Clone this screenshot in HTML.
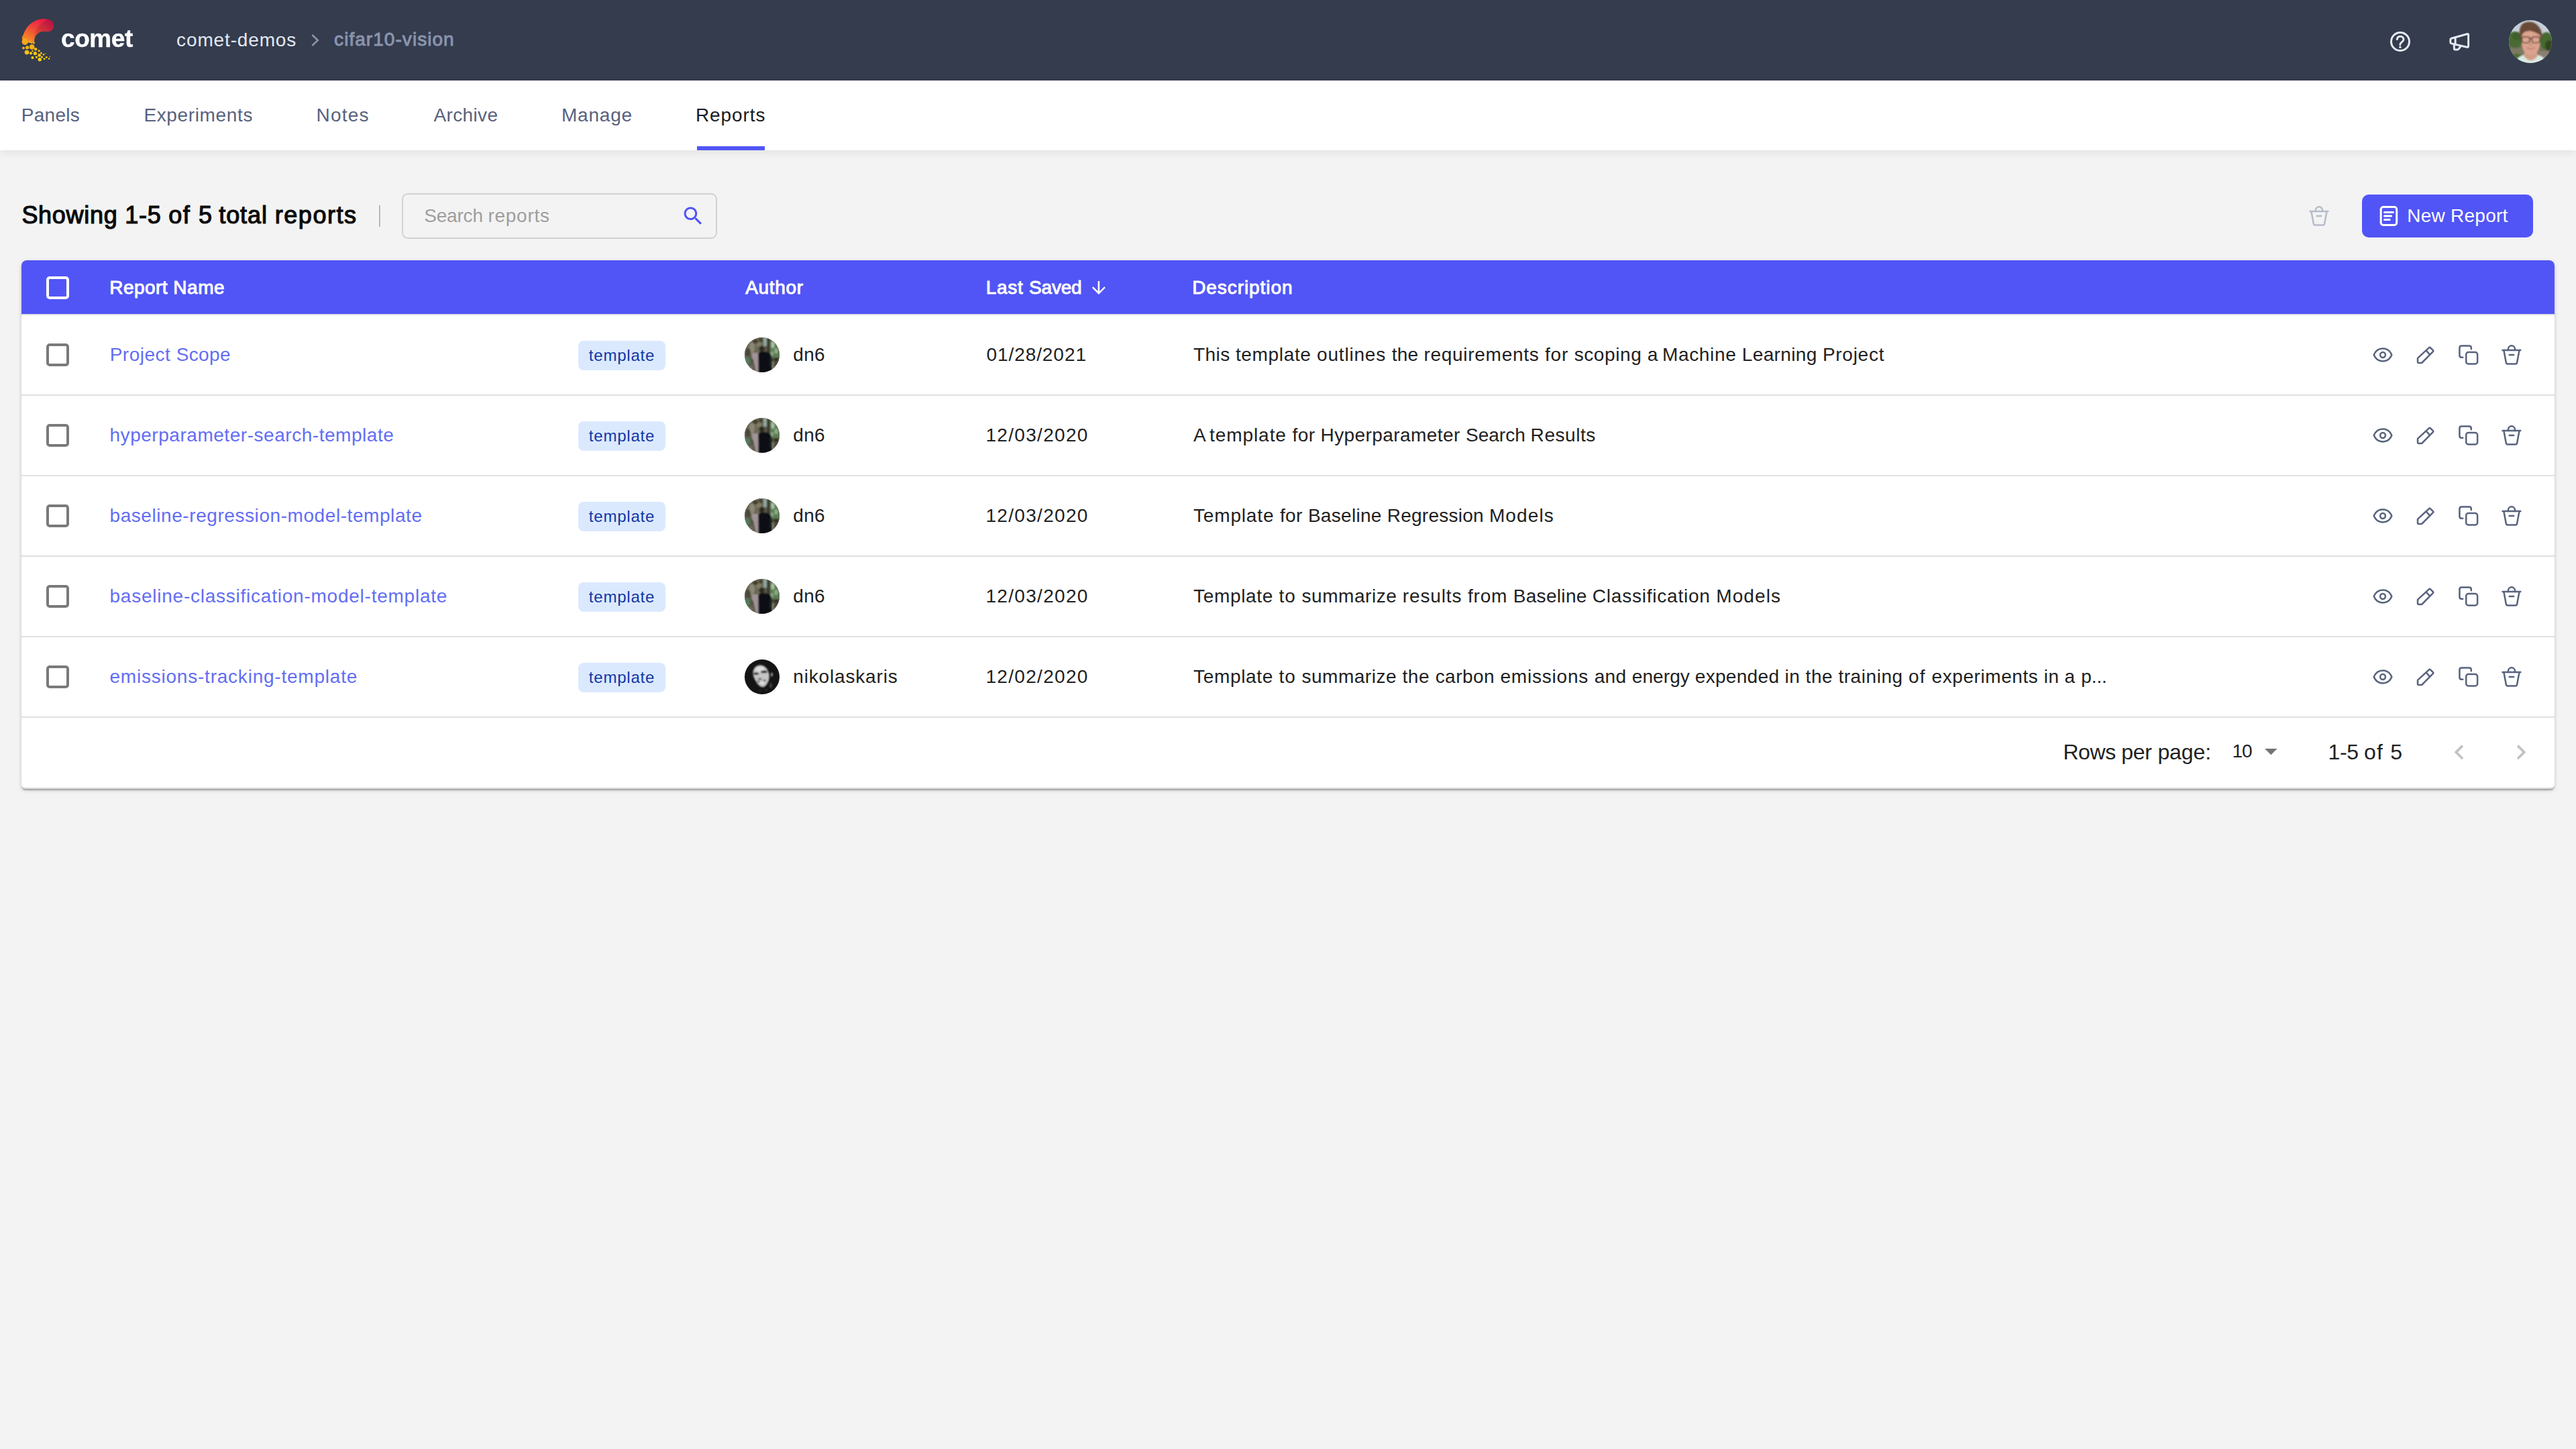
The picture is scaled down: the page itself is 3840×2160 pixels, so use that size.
<!DOCTYPE html>
<html lang="en">
<head>
<meta charset="utf-8">
<title>Reports - cifar10-vision - Comet</title>
<style>
html,body{margin:0;padding:0}
body{width:3840px;height:2160px;background:#f3f3f3;position:relative;overflow:hidden;font-family:"Liberation Sans",sans-serif}
.a{position:absolute}
.t{position:absolute;white-space:nowrap;line-height:1;display:block}
#hdr{left:0;top:0;width:3840px;height:120px;background:#343c4e}
#tabs{left:0;top:120px;width:3840px;height:104px;background:#fff;box-shadow:0 3px 12px rgba(0,0,0,.075)}
#ind{left:1039px;top:218px;width:101px;height:6px;background:#5155f5}
#sep{left:565px;top:306px;width:2px;height:32px;background:#b9b9b9}
#search{left:599px;top:288px;width:466px;height:64px;border:2px solid #d2d2d2;border-radius:9px}
#newbtn{left:3521px;top:290px;width:255px;height:64px;background:#5155f5;border-radius:10px}
#tbl{left:32px;top:388px;width:3776px;height:786px;background:#fff;border-bottom:2px solid #dcdcdc;border-radius:8px 8px 6px 6px;box-shadow:0 2px 6px rgba(0,0,0,.17),0 4px 2px -2px rgba(0,0,0,.12),0 2px 2px rgba(0,0,0,.14)}
#th{left:32px;top:388px;width:3776px;height:80px;background:#5155f5;border-radius:8px 8px 0 0}
.rl{position:absolute;left:32px;width:3776px;height:2px;background:#e0e0e0}
.cb{position:absolute;left:69px;width:26px;height:26px;border:4px solid #7a7a7a;border-radius:5px}
.badge{position:absolute;left:862px;width:130px;height:44px;background:#dbe9fe;border-radius:8px}
.av{position:absolute;left:1110px;width:52px;height:52px;border-radius:50%;overflow:hidden}
svg{position:absolute;left:0;top:0;overflow:visible}
</style>
</head>
<body>
<div id="hdr" class="a"></div>
<div id="tabs" class="a"></div>
<div id="ind" class="a"></div>
<div id="sep" class="a"></div>
<div id="search" class="a"></div>
<div id="newbtn" class="a"></div>
<div id="tbl" class="a"></div>
<div id="th" class="a"></div>
<div class="rl" style="top:468px"></div>
<div class="rl" style="top:588px"></div>
<div class="rl" style="top:708px"></div>
<div class="rl" style="top:828px"></div>
<div class="rl" style="top:948px"></div>
<div class="rl" style="top:1068px"></div>
<div class="cb" style="top:412px;border-color:#fff"></div>
<div class="cb" style="top:512px"></div>
<div class="cb" style="top:632px"></div>
<div class="cb" style="top:752px"></div>
<div class="cb" style="top:872px"></div>
<div class="cb" style="top:992px"></div>
<div class="badge" style="top:508px"></div>
<div class="badge" style="top:628px"></div>
<div class="badge" style="top:748px"></div>
<div class="badge" style="top:868px"></div>
<div class="badge" style="top:988px"></div>
<svg width="3840" height="2160" viewBox="0 0 3840 2160"><defs><clipPath id="uc"><circle cx="3772" cy="62" r="32"/></clipPath><clipPath id="ac"><circle cx="26" cy="26" r="26"/></clipPath><filter id="bl" x="-20%" y="-20%" width="140%" height="140%"><feGaussianBlur stdDeviation="1.3"/></filter><filter id="bl2" x="-20%" y="-20%" width="140%" height="140%"><feGaussianBlur stdDeviation="0.9"/></filter><g id="dn6"><g clip-path="url(#ac)"><rect width="52" height="52" fill="#5d5a4b"/><g filter="url(#bl)"><rect x="-3" y="-3" width="30" height="28" fill="#6a6756"/><ellipse cx="11" cy="15" rx="4" ry="8" fill="#8d8874"/><ellipse cx="21" cy="10" rx="4" ry="4" fill="#7e7b64"/><ellipse cx="16" cy="6" rx="4" ry="3" fill="#3f3d2b"/><ellipse cx="24" cy="4" rx="3" ry="3" fill="#45432f"/><ellipse cx="5" cy="22" rx="4" ry="6" fill="#4a4638"/><rect x="28" y="-3" width="5" height="16" fill="#8fa69c"/><rect x="33" y="-3" width="5" height="26" fill="#403c30"/><rect x="38" y="-3" width="17" height="34" fill="#5d7c55"/><ellipse cx="42" cy="11" rx="2.6" ry="5" fill="#a9c2a0"/><ellipse cx="47" cy="20" rx="2.5" ry="4" fill="#93ae8a"/><ellipse cx="41" cy="24" rx="2" ry="3" fill="#8eaa88"/><rect x="38" y="30" width="17" height="25" fill="#4b4a3b"/><rect x="39.5" y="36" width="4" height="18" fill="#858374"/><ellipse cx="47" cy="33" rx="2.5" ry="2.5" fill="#2b2a1c"/><ellipse cx="3" cy="35" rx="5" ry="6" fill="#4f7a5c"/><rect x="-2" y="42" width="14" height="12" fill="#66735c"/><ellipse cx="13.5" cy="34" rx="2.6" ry="3.4" fill="#2a241c"/><path d="M10.5 23 L20 23 L22 54 L17 54 Q15 38 10.5 29Z" fill="#a09396"/><ellipse cx="25.5" cy="17" rx="4" ry="4.4" fill="#2f2a1f"/><path d="M20.5 54 V25 Q21 21 26 21 L35 22 Q40 24 40 31 L41.5 54Z" fill="#0d0f13"/><rect x="37" y="30" width="4" height="14" fill="#14201a"/></g></g></g><g id="nk"><g clip-path="url(#ac)"><rect width="52" height="52" fill="#141414"/><g filter="url(#bl)"><path d="M16.2 11 Q22 7 28 9.5 Q34 12 36.5 22 Q37.5 30 34.5 34.5 Q31 41.5 26.5 41.5 Q21 40 18 34.5 Q13.5 28 12.5 22 Q12 15 16.2 11Z" fill="#c4c4c4"/><ellipse cx="23" cy="14.5" rx="7" ry="4" fill="#dcdcdc"/><ellipse cx="17" cy="21.2" rx="4.2" ry="1.7" fill="#1c1c1c"/><ellipse cx="29" cy="18.4" rx="5" ry="1.9" fill="#1c1c1c"/><ellipse cx="22.8" cy="29.2" rx="3" ry="1.1" fill="#3a3a3a"/><ellipse cx="20.5" cy="33" rx="1.8" ry="1.2" fill="#444"/><ellipse cx="29.8" cy="31.2" rx="2" ry="1.2" fill="#555"/><ellipse cx="26" cy="35" rx="3.5" ry="1.6" fill="#e6e6e6"/><ellipse cx="40.5" cy="22.5" rx="1.4" ry="3" fill="#a8a8a8"/><ellipse cx="39" cy="39" rx="2.2" ry="4" fill="#3c3c3c"/><ellipse cx="23" cy="46.5" rx="2" ry="1.4" fill="#2c2c2c"/><ellipse cx="32" cy="45.5" rx="2" ry="1.4" fill="#2c2c2c"/></g></g></g></defs><g clip-path="url(#uc)"><g transform="translate(3740 30)"><rect x="-2" y="-2" width="68" height="68" fill="#c6cfd9"/><g filter="url(#bl)"><rect x="-4" y="30" width="72" height="40" fill="#6f6e58"/><ellipse cx="9" cy="29" rx="12" ry="12" fill="#4a6a36"/><ellipse cx="12" cy="24" rx="7" ry="6" fill="#3f5e2c"/><ellipse cx="56" cy="31" rx="10" ry="13" fill="#456b2f"/><ellipse cx="60" cy="38" rx="6" ry="8" fill="#33471f"/><rect x="-4" y="42" width="26" height="26" fill="#7c7a60"/><ellipse cx="12" cy="56" rx="10" ry="6" fill="#4f6a36"/><rect x="44" y="46" width="24" height="20" fill="#8d7f70"/></g><g filter="url(#bl2)"><path d="M6 70 Q10 55 22 51.5 L43 51.5 Q55 55 60 70Z" fill="#d8eae2"/><path d="M22.5 46 H42.5 V54 Q32.5 66 22.5 54Z" fill="#d49b87"/><path d="M19 22 Q19 9 32.5 9 Q46.5 9 46.5 22 V35 Q45 51.5 32.7 51.5 Q20.5 51.5 19 35Z" fill="#dca48f"/><path d="M16.6 28 Q13.6 13 19.5 6.2 Q26 0.8 36 3.2 Q47 7.6 49.9 22 Q50.2 26 47.4 30 Q47.4 25 45.5 21.5 Q40 18 32 16 Q25 16 21.5 19 Q19 22 18.8 28Z" fill="#694a38"/><g fill="none" stroke="#2e221e" stroke-width="1.3"><rect x="19.4" y="24.8" width="11.6" height="8.8" rx="3.2"/><rect x="34.4" y="24.8" width="11.6" height="8.8" rx="3.2"/><path d="M31 27.2 H34.4"/></g><path d="M26 41.5 Q32.5 44 39 41.5" fill="none" stroke="#b9766a" stroke-width="1.6"/><path d="M30 36.5 H35" stroke="#b9806d" stroke-width="1.5"/></g></g></g><use href="#dn6" x="1110" y="503"/><use href="#dn6" x="1110" y="623"/><use href="#dn6" x="1110" y="743"/><use href="#dn6" x="1110" y="863"/><use href="#nk" x="1110" y="983"/></svg>
<svg width="3840" height="2160" viewBox="0 0 3840 2160">
<defs><linearGradient id="lg1" gradientUnits="userSpaceOnUse" x1="60" y1="28" x2="40" y2="64"><stop offset="0" stop-color="#ef1b48"/><stop offset=".45" stop-color="#ef4a38"/><stop offset="1" stop-color="#f59a1f"/></linearGradient><linearGradient id="lg2" gradientUnits="userSpaceOnUse" x1="80" y1="32" x2="50" y2="62"><stop offset="0" stop-color="#b80d44"/><stop offset=".5" stop-color="#cf3239"/><stop offset="1" stop-color="#ea6a2a"/></linearGradient></defs><path d="M33.1 58.6 C31.9 56.5 34.0 53.7 35.0 50.9 C36.1 48.2 37.6 44.8 39.5 42.1 C41.3 39.4 43.5 36.9 46.1 34.9 C48.7 32.9 52.0 31.0 54.9 29.9 C57.9 28.8 60.8 28.4 63.7 28.3 C66.7 28.1 70.2 28.4 72.6 29.1 C75.0 29.8 76.9 31.3 78.1 32.7 C79.3 34.1 80.0 35.9 80.0 37.7 C80.1 39.4 79.4 41.7 78.4 43.2 C77.3 44.7 75.4 46.1 73.7 46.8 C72.0 47.4 70.1 47.0 68.2 47.1 C66.2 47.1 64.0 46.6 62.1 47.1 C60.2 47.5 58.1 48.6 56.6 49.8 C55.0 51.0 53.6 52.6 52.7 54.2 C51.8 55.9 51.3 58.1 51.1 59.7 C50.8 61.4 52.4 63.5 50.9 64.2 C49.5 64.8 45.2 64.5 42.2 63.6 C39.2 62.7 34.3 60.8 33.1 58.6Z" fill="url(#lg1)"/><path d="M70.9 28.9 C74.0 28.3 76.6 31.2 78.1 32.7 C79.6 34.2 80.0 35.9 80.0 37.7 C80.1 39.4 79.4 41.7 78.4 43.2 C77.3 44.7 75.4 46.1 73.7 46.8 C72.0 47.4 70.1 47.0 68.2 47.1 C66.2 47.1 64.0 46.6 62.1 47.1 C60.2 47.5 58.1 48.6 56.6 49.8 C55.0 51.0 53.6 52.6 52.7 54.2 C51.8 55.9 51.3 58.1 51.1 59.7 C50.8 61.4 50.9 64.9 50.9 64.2 C51.0 63.4 50.7 58.6 51.2 55.3 C51.6 52.1 52.4 48.0 53.8 44.8 C55.3 41.7 57.0 39.2 59.9 36.6 C62.7 33.9 67.9 29.6 70.9 28.9Z" fill="url(#lg2)"/><circle cx="37.2" cy="62.2" r="4.69" fill="rgb(244,168,27)"/><circle cx="44.7" cy="62.0" r="1.93" fill="rgb(244,168,28)"/><circle cx="50.5" cy="64.2" r="1.38" fill="rgb(244,171,26)"/><circle cx="46.9" cy="64.2" r="0.99" fill="rgb(244,171,26)"/><circle cx="47.6" cy="69.9" r="3.75" fill="rgb(247,180,20)"/><circle cx="40.6" cy="70.8" r="2.65" fill="rgb(247,182,20)"/><circle cx="35.0" cy="71.6" r="1.93" fill="rgb(247,183,19)"/><circle cx="53.1" cy="73.3" r="2.21" fill="rgb(248,186,17)"/><circle cx="58.1" cy="75.8" r="1.66" fill="rgb(249,190,15)"/><circle cx="40.0" cy="78.1" r="3.31" fill="rgb(250,194,13)"/><circle cx="48.5" cy="76.0" r="1.21" fill="rgb(249,191,15)"/><circle cx="46.0" cy="79.3" r="2.10" fill="rgb(251,196,12)"/><circle cx="52.4" cy="79.6" r="2.65" fill="rgb(251,197,12)"/><circle cx="58.7" cy="82.4" r="2.32" fill="rgb(252,201,9)"/><circle cx="61.4" cy="79.2" r="1.38" fill="rgb(251,196,12)"/><circle cx="65.1" cy="81.3" r="1.38" fill="rgb(251,199,10)"/><circle cx="68.4" cy="79.7" r="0.66" fill="rgb(251,197,12)"/><circle cx="48.5" cy="86.0" r="2.10" fill="rgb(253,207,6)"/><circle cx="54.4" cy="85.1" r="1.66" fill="rgb(253,206,7)"/><circle cx="62.5" cy="85.0" r="1.55" fill="rgb(253,205,7)"/><circle cx="59.2" cy="88.7" r="2.65" fill="rgb(255,212,4)"/><circle cx="66.1" cy="87.8" r="1.38" fill="rgb(254,210,4)"/><circle cx="69.3" cy="85.3" r="1.38" fill="rgb(253,206,7)"/><circle cx="73.1" cy="87.5" r="1.21" fill="rgb(254,209,5)"/><circle cx="74.5" cy="84.3" r="0.66" fill="rgb(253,204,7)"/>
<path d="M465.3 52 L473.8 60 L465.3 68" fill="none" stroke="#8a94ab" stroke-width="2.6"/>
<g fill="none" stroke="#e6e9f2" stroke-width="3" stroke-linecap="round" stroke-linejoin="round"><circle cx="3578" cy="62" r="13.5"/><path d="M3573.3 58.6 C3573.6 55.8 3575.6 54.3 3578.2 54.3 C3581 54.3 3583 56.2 3583 58.7 C3583 62.6 3577.8 62.6 3577.8 66.6"/><circle cx="3577.9" cy="70.3" r="1.7" fill="#e6e9f2" stroke="none"/><path d="M3654.3 57.3 L3677.4 50.7 Q3679.6 50.1 3679.6 52.3 V68.6 Q3679.6 70.8 3677.4 70.3 L3654.3 64.9 Q3652.8 64.5 3652.8 63 V59.2 Q3652.8 57.7 3654.3 57.3Z"/><path d="M3660.1 55.8 V66.2"/><path d="M3658.3 66 V72 Q3658.3 74 3660.3 74 H3663.2 Q3664.3 74 3665 73.1 L3667.8 69.3"/></g>
<g transform="translate(1015.1 303.9) scale(1.51)"><path fill="#5155f5" d="M15.5 14h-.79l-.28-.27C15.41 12.59 16 11.11 16 9.5 16 5.91 13.09 3 9.5 3S3 5.91 3 9.5 5.91 16 9.5 16c1.61 0 3.09-.59 4.23-1.57l.27.28v.79l5 4.99L20.49 19l-4.99-5zm-6 0C7.01 14 5 11.99 5 9.5S7.01 5 9.5 5 14 7.01 14 9.5 11.99 14 9.5 14z"/></g>
<g fill="none" stroke="#b5bccb" stroke-width="2.5" stroke-linecap="round" stroke-linejoin="round"><path d="M3443.5 315.0 H3470.3"/><path d="M3451.9 315.0 V313.4 a5.05 5.05 0 0 1 10.1 0 V315.0"/><path d="M3445.4 315.3 L3448.8 333.4 Q3449.2 335.4 3451.2 335.4 H3462.7 Q3464.7 335.4 3465.1 333.4 L3468.5 315.3"/><path d="M3453.6 322.0 H3460.2"/></g>
<g fill="none" stroke="#fff" stroke-width="3" stroke-linecap="round" stroke-linejoin="round"><rect x="3549.15" y="308.5" width="23.55" height="27" rx="3.6"/><path d="M3554.5 316.6 H3567.4 M3554.5 322 H3564.5 M3554.5 327.4 H3562.2"/></g>
<g transform="translate(1622.9 414) scale(1.25)"><path fill="#fff" d="M20 12l-1.41-1.41L13 16.17V4h-2v12.17l-5.58-5.59L4 12l8 8 8-8z"/></g>
<g transform="translate(0 0)" fill="none" stroke="#58627e" stroke-width="2.5" stroke-linecap="round" stroke-linejoin="round"><path d="M3538.7 529 C3541 523.5 3545.5 519.5 3552 519.5 C3558.5 519.5 3563 523.5 3565.3 529 C3563 534.5 3558.5 538.4 3552 538.4 C3545.5 538.4 3541 534.5 3538.7 529Z"/><circle cx="3552" cy="529" r="3.9"/><path d="M3604 533.8 L3620.8 518.3 Q3621.9 517.3 3623 518.4 L3626.8 522.2 Q3627.8 523.2 3626.8 524.2 L3610.6 540.5 Q3610.2 540.9 3609.6 540.9 H3605.5 Q3604 540.9 3604 539.4 Z"/><path d="M3616.6 522.7 L3622 528.3"/><path d="M3683.8 520.2 V518.4 Q3683.8 515.4 3680.8 515.4 H3669.4 Q3666.4 515.4 3666.4 518.4 V529.8 Q3666.4 532.8 3669.4 532.8 H3671.2"/><rect x="3676.2" y="525.1" width="16.9" height="17.3" rx="3.2"/><path d="M3730.5 522.0 H3757.3"/><path d="M3738.9 522.0 V520.4 a5.05 5.05 0 0 1 10.1 0 V522.0"/><path d="M3732.4 522.3 L3735.8 540.4 Q3736.2 542.4 3738.2 542.4 H3749.7 Q3751.7 542.4 3752.1 540.4 L3755.5 522.3"/><path d="M3740.6 529.0 H3747.2"/></g>
<g transform="translate(0 120)" fill="none" stroke="#58627e" stroke-width="2.5" stroke-linecap="round" stroke-linejoin="round"><path d="M3538.7 529 C3541 523.5 3545.5 519.5 3552 519.5 C3558.5 519.5 3563 523.5 3565.3 529 C3563 534.5 3558.5 538.4 3552 538.4 C3545.5 538.4 3541 534.5 3538.7 529Z"/><circle cx="3552" cy="529" r="3.9"/><path d="M3604 533.8 L3620.8 518.3 Q3621.9 517.3 3623 518.4 L3626.8 522.2 Q3627.8 523.2 3626.8 524.2 L3610.6 540.5 Q3610.2 540.9 3609.6 540.9 H3605.5 Q3604 540.9 3604 539.4 Z"/><path d="M3616.6 522.7 L3622 528.3"/><path d="M3683.8 520.2 V518.4 Q3683.8 515.4 3680.8 515.4 H3669.4 Q3666.4 515.4 3666.4 518.4 V529.8 Q3666.4 532.8 3669.4 532.8 H3671.2"/><rect x="3676.2" y="525.1" width="16.9" height="17.3" rx="3.2"/><path d="M3730.5 522.0 H3757.3"/><path d="M3738.9 522.0 V520.4 a5.05 5.05 0 0 1 10.1 0 V522.0"/><path d="M3732.4 522.3 L3735.8 540.4 Q3736.2 542.4 3738.2 542.4 H3749.7 Q3751.7 542.4 3752.1 540.4 L3755.5 522.3"/><path d="M3740.6 529.0 H3747.2"/></g>
<g transform="translate(0 240)" fill="none" stroke="#58627e" stroke-width="2.5" stroke-linecap="round" stroke-linejoin="round"><path d="M3538.7 529 C3541 523.5 3545.5 519.5 3552 519.5 C3558.5 519.5 3563 523.5 3565.3 529 C3563 534.5 3558.5 538.4 3552 538.4 C3545.5 538.4 3541 534.5 3538.7 529Z"/><circle cx="3552" cy="529" r="3.9"/><path d="M3604 533.8 L3620.8 518.3 Q3621.9 517.3 3623 518.4 L3626.8 522.2 Q3627.8 523.2 3626.8 524.2 L3610.6 540.5 Q3610.2 540.9 3609.6 540.9 H3605.5 Q3604 540.9 3604 539.4 Z"/><path d="M3616.6 522.7 L3622 528.3"/><path d="M3683.8 520.2 V518.4 Q3683.8 515.4 3680.8 515.4 H3669.4 Q3666.4 515.4 3666.4 518.4 V529.8 Q3666.4 532.8 3669.4 532.8 H3671.2"/><rect x="3676.2" y="525.1" width="16.9" height="17.3" rx="3.2"/><path d="M3730.5 522.0 H3757.3"/><path d="M3738.9 522.0 V520.4 a5.05 5.05 0 0 1 10.1 0 V522.0"/><path d="M3732.4 522.3 L3735.8 540.4 Q3736.2 542.4 3738.2 542.4 H3749.7 Q3751.7 542.4 3752.1 540.4 L3755.5 522.3"/><path d="M3740.6 529.0 H3747.2"/></g>
<g transform="translate(0 360)" fill="none" stroke="#58627e" stroke-width="2.5" stroke-linecap="round" stroke-linejoin="round"><path d="M3538.7 529 C3541 523.5 3545.5 519.5 3552 519.5 C3558.5 519.5 3563 523.5 3565.3 529 C3563 534.5 3558.5 538.4 3552 538.4 C3545.5 538.4 3541 534.5 3538.7 529Z"/><circle cx="3552" cy="529" r="3.9"/><path d="M3604 533.8 L3620.8 518.3 Q3621.9 517.3 3623 518.4 L3626.8 522.2 Q3627.8 523.2 3626.8 524.2 L3610.6 540.5 Q3610.2 540.9 3609.6 540.9 H3605.5 Q3604 540.9 3604 539.4 Z"/><path d="M3616.6 522.7 L3622 528.3"/><path d="M3683.8 520.2 V518.4 Q3683.8 515.4 3680.8 515.4 H3669.4 Q3666.4 515.4 3666.4 518.4 V529.8 Q3666.4 532.8 3669.4 532.8 H3671.2"/><rect x="3676.2" y="525.1" width="16.9" height="17.3" rx="3.2"/><path d="M3730.5 522.0 H3757.3"/><path d="M3738.9 522.0 V520.4 a5.05 5.05 0 0 1 10.1 0 V522.0"/><path d="M3732.4 522.3 L3735.8 540.4 Q3736.2 542.4 3738.2 542.4 H3749.7 Q3751.7 542.4 3752.1 540.4 L3755.5 522.3"/><path d="M3740.6 529.0 H3747.2"/></g>
<g transform="translate(0 480)" fill="none" stroke="#58627e" stroke-width="2.5" stroke-linecap="round" stroke-linejoin="round"><path d="M3538.7 529 C3541 523.5 3545.5 519.5 3552 519.5 C3558.5 519.5 3563 523.5 3565.3 529 C3563 534.5 3558.5 538.4 3552 538.4 C3545.5 538.4 3541 534.5 3538.7 529Z"/><circle cx="3552" cy="529" r="3.9"/><path d="M3604 533.8 L3620.8 518.3 Q3621.9 517.3 3623 518.4 L3626.8 522.2 Q3627.8 523.2 3626.8 524.2 L3610.6 540.5 Q3610.2 540.9 3609.6 540.9 H3605.5 Q3604 540.9 3604 539.4 Z"/><path d="M3616.6 522.7 L3622 528.3"/><path d="M3683.8 520.2 V518.4 Q3683.8 515.4 3680.8 515.4 H3669.4 Q3666.4 515.4 3666.4 518.4 V529.8 Q3666.4 532.8 3669.4 532.8 H3671.2"/><rect x="3676.2" y="525.1" width="16.9" height="17.3" rx="3.2"/><path d="M3730.5 522.0 H3757.3"/><path d="M3738.9 522.0 V520.4 a5.05 5.05 0 0 1 10.1 0 V522.0"/><path d="M3732.4 522.3 L3735.8 540.4 Q3736.2 542.4 3738.2 542.4 H3749.7 Q3751.7 542.4 3752.1 540.4 L3755.5 522.3"/><path d="M3740.6 529.0 H3747.2"/></g>
<path d="M3376 1116 L3385.3 1125.3 L3394.6 1116Z" fill="#757575"/>
<g transform="translate(3644 1099.3) scale(1.8333)"><path fill="#c2c2c2" d="M15.41 7.41L14 6l-6 6 6 6 1.41-1.41L10.83 12z"/></g>
<g transform="translate(3736 1099.3) scale(1.8333)"><path fill="#c2c2c2" d="M10 6L8.59 7.41 13.17 12l-4.58 4.59L10 18l6-6z"/></g>
</svg>
<span class="t" style="left:91.19px;top:40.10px;font-size:36.5px;letter-spacing:-0.4px;color:#fff;font-weight:700;-webkit-text-stroke:0.4px #fff;transform:scaleX(1.0138);transform-origin:0 0">comet</span>
<span class="t" style="left:263.10px;top:45.60px;font-size:28px;letter-spacing:0.859px;color:#e4e8f2">comet-demos</span>
<span class="t" style="left:498.08px;top:45.30px;font-size:28px;letter-spacing:1.051px;color:#8a94ab;-webkit-text-stroke:0.95px #8a94ab">cifar10-vision</span>
<span class="t" style="left:31.80px;top:157.70px;font-size:28px;letter-spacing:0.277px;color:#58617d">Panels</span>
<span class="t" style="left:214.40px;top:157.70px;font-size:28px;letter-spacing:0.639px;color:#58617d">Experiments</span>
<span class="t" style="left:471.50px;top:157.70px;font-size:28px;letter-spacing:1.189px;color:#58617d">Notes</span>
<span class="t" style="left:646.50px;top:157.70px;font-size:28px;letter-spacing:0.351px;color:#58617d">Archive</span>
<span class="t" style="left:837.00px;top:157.70px;font-size:28px;letter-spacing:0.797px;color:#58617d">Manage</span>
<span class="t" style="left:1037.00px;top:157.70px;font-size:28px;letter-spacing:0.893px;color:#191b22">Reports</span>
<span class="t" style="left:32.41px;top:303.13px;font-size:36px;color:#0b0b0b;-webkit-text-stroke:1.22px #0b0b0b"><span style="letter-spacing:0.701px">Showing </span><span style="letter-spacing:0.767px">1-5 </span><span style="letter-spacing:1.558px">of </span><span style="letter-spacing:0.138px">5 </span><span style="letter-spacing:0.909px">total </span><span style="letter-spacing:1.539px">reports</span></span>
<span class="t" style="left:632.20px;top:307.70px;font-size:28px;color:#9e9e9e"><span style="letter-spacing:-0.185px">Search </span><span style="letter-spacing:0.743px">reports</span></span>
<span class="t" style="left:3588.20px;top:307.70px;font-size:28px;color:#ffffff"><span style="letter-spacing:0.252px">New </span><span style="letter-spacing:0.268px">Report</span></span>
<span class="t" style="left:163.28px;top:414.90px;font-size:28px;color:#ffffff;-webkit-text-stroke:0.95px #ffffff"><span style="letter-spacing:0.440px">Report </span><span style="letter-spacing:0.610px">Name</span></span>
<span class="t" style="left:1111.18px;top:414.90px;font-size:28px;letter-spacing:0.695px;color:#ffffff;-webkit-text-stroke:0.95px #ffffff">Author</span>
<span class="t" style="left:1469.68px;top:414.90px;font-size:28px;color:#ffffff;-webkit-text-stroke:0.95px #ffffff"><span style="letter-spacing:0.739px">Last </span><span style="letter-spacing:-0.218px">Saved</span></span>
<span class="t" style="left:1777.18px;top:414.90px;font-size:28px;letter-spacing:0.927px;color:#ffffff;-webkit-text-stroke:0.95px #ffffff">Description</span>
<span class="t" style="left:163.70px;top:514.60px;font-size:28px;color:#636df3"><span style="letter-spacing:0.510px">Project </span><span style="letter-spacing:0.370px">Scope</span></span>
<span class="t" style="left:877.80px;top:517.78px;font-size:24px;letter-spacing:0.785px;color:#1236a8">template</span>
<span class="t" style="left:1182.30px;top:514.60px;font-size:28px;letter-spacing:0.278px;color:#212121">dn6</span>
<span class="t" style="left:1470.40px;top:514.60px;font-size:28px;letter-spacing:0.937px;color:#212121">01/28/2021</span>
<span class="t" style="left:1779.00px;top:514.60px;font-size:28px;color:#212121"><span style="letter-spacing:0.445px">This </span><span style="letter-spacing:0.659px">template </span><span style="letter-spacing:0.812px">outlines </span><span style="letter-spacing:0.274px">the </span><span style="letter-spacing:0.716px">requirements </span><span style="letter-spacing:0.811px">for </span><span style="letter-spacing:0.601px">scoping </span><span style="letter-spacing:-0.526px">a </span><span style="letter-spacing:0.636px">Machine </span><span style="letter-spacing:0.371px">Learning </span><span style="letter-spacing:0.739px">Project</span></span>
<span class="t" style="left:163.50px;top:634.60px;font-size:28px;letter-spacing:0.536px;color:#636df3">hyperparameter-search-template</span>
<span class="t" style="left:877.80px;top:637.78px;font-size:24px;letter-spacing:0.785px;color:#1236a8">template</span>
<span class="t" style="left:1182.30px;top:634.60px;font-size:28px;letter-spacing:0.278px;color:#212121">dn6</span>
<span class="t" style="left:1469.40px;top:634.60px;font-size:28px;letter-spacing:1.315px;color:#212121">12/03/2020</span>
<span class="t" style="left:1779.00px;top:634.60px;font-size:28px;color:#212121"><span style="letter-spacing:-0.478px">A </span><span style="letter-spacing:0.936px">template </span><span style="letter-spacing:0.361px">for </span><span style="letter-spacing:0.428px">Hyperparameter </span><span style="letter-spacing:0.015px">Search </span><span style="letter-spacing:0.556px">Results</span></span>
<span class="t" style="left:163.50px;top:754.60px;font-size:28px;letter-spacing:0.570px;color:#636df3">baseline-regression-model-template</span>
<span class="t" style="left:877.80px;top:757.78px;font-size:24px;letter-spacing:0.785px;color:#1236a8">template</span>
<span class="t" style="left:1182.30px;top:754.60px;font-size:28px;letter-spacing:0.278px;color:#212121">dn6</span>
<span class="t" style="left:1469.40px;top:754.60px;font-size:28px;letter-spacing:1.315px;color:#212121">12/03/2020</span>
<span class="t" style="left:1779.00px;top:754.60px;font-size:28px;color:#212121"><span style="letter-spacing:0.834px">Template </span><span style="letter-spacing:0.386px">for </span><span style="letter-spacing:0.290px">Baseline </span><span style="letter-spacing:0.254px">Regression </span><span style="letter-spacing:1.128px">Models</span></span>
<span class="t" style="left:163.50px;top:874.60px;font-size:28px;letter-spacing:0.762px;color:#636df3">baseline-classification-model-template</span>
<span class="t" style="left:877.80px;top:877.78px;font-size:24px;letter-spacing:0.785px;color:#1236a8">template</span>
<span class="t" style="left:1182.30px;top:874.60px;font-size:28px;letter-spacing:0.278px;color:#212121">dn6</span>
<span class="t" style="left:1469.40px;top:874.60px;font-size:28px;letter-spacing:1.315px;color:#212121">12/03/2020</span>
<span class="t" style="left:1779.00px;top:874.60px;font-size:28px;color:#212121"><span style="letter-spacing:0.679px">Template </span><span style="letter-spacing:0.923px">to </span><span style="letter-spacing:0.571px">summarize </span><span style="letter-spacing:0.869px">results </span><span style="letter-spacing:0.764px">from </span><span style="letter-spacing:0.335px">Baseline </span><span style="letter-spacing:0.778px">Classification </span><span style="letter-spacing:1.108px">Models</span></span>
<span class="t" style="left:163.50px;top:994.60px;font-size:28px;letter-spacing:0.777px;color:#636df3">emissions-tracking-template</span>
<span class="t" style="left:877.80px;top:997.78px;font-size:24px;letter-spacing:0.785px;color:#1236a8">template</span>
<span class="t" style="left:1182.30px;top:994.60px;font-size:28px;letter-spacing:0.830px;color:#212121">nikolaskaris</span>
<span class="t" style="left:1469.40px;top:994.60px;font-size:28px;letter-spacing:1.315px;color:#212121">12/02/2020</span>
<span class="t" style="left:1779.00px;top:994.60px;font-size:28px;color:#212121"><span style="letter-spacing:0.679px">Template </span><span style="letter-spacing:0.923px">to </span><span style="letter-spacing:0.531px">summarize </span><span style="letter-spacing:0.624px">the </span><span style="letter-spacing:0.487px">carbon </span><span style="letter-spacing:0.794px">emissions </span><span style="letter-spacing:0.401px">and </span><span style="letter-spacing:0.087px">energy </span><span style="letter-spacing:0.313px">expended </span><span style="letter-spacing:0.543px">in </span><span style="letter-spacing:0.524px">the </span><span style="letter-spacing:0.565px">training </span><span style="letter-spacing:1.123px">of </span><span style="letter-spacing:0.576px">experiments </span><span style="letter-spacing:0.376px">in </span><span style="letter-spacing:0.674px">a </span><span style="letter-spacing:-0.077px">p...</span></span>
<span class="t" style="left:3075.40px;top:1104.91px;font-size:32px;color:#212121"><span style="letter-spacing:-0.401px">Rows </span><span style="letter-spacing:-0.260px">per </span><span style="letter-spacing:-0.097px">page:</span></span>
<span class="t" style="left:3327.40px;top:1106.00px;font-size:28px;letter-spacing:-0.972px;color:#212121">10</span>
<span class="t" style="left:3470.60px;top:1104.91px;font-size:32px;color:#212121"><span style="letter-spacing:-0.410px">1-5 </span><span style="letter-spacing:1.174px">of </span><span style="letter-spacing:0.000px">5</span></span>
</body>
</html>
